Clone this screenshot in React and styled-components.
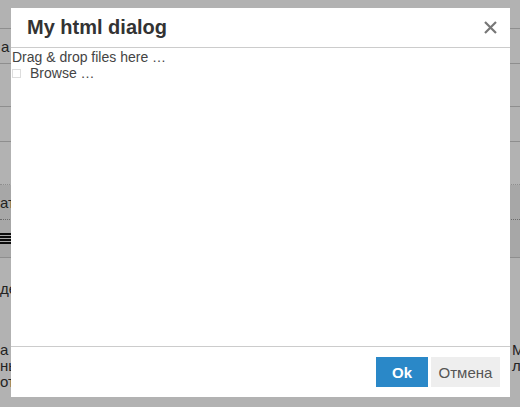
import React from 'react'
import styled, { createGlobalStyle } from 'styled-components'

const GlobalStyle = createGlobalStyle`
  html, body {
    margin: 0;
    padding: 0;
    background: #fff;
    font-family: "Liberation Sans", Arial, sans-serif;
    color: #333;
  }
`

const Page = styled.div`
  width: 520px;
  height: 407px;
  overflow: hidden;
  position: relative;
`

const Row = styled.div`
  height: ${props => props.h}px;
  box-sizing: border-box;
  border-bottom: 1px ${props => props.dotted ? 'dotted' : 'solid'} #ccc;
  display: flex;
  align-items: center;
  font-size: 15px;
  padding-left: 1px;
`

const Toolbar = styled.div`
  background: #f0f0f0;
  border-bottom: 1px solid #ccc;
`

const ToolRow = styled.div`
  height: ${props => props.h}px;
  box-sizing: border-box;
  display: flex;
  align-items: center;
  font-size: 15px;
  border-bottom: ${props => props.dotted ? '1px dotted #999' : 'none'};
`

const Bars = styled.span`
  display: inline-block;
  width: 11px;
  height: 12px;
  background: repeating-linear-gradient(#111 0 2px, transparent 2px 3px);
`

const Text = styled.p`
  margin: 0;
  font-size: 15px;
  line-height: 16px;
  padding-top: ${props => props.top || 0}px;
`

const Columns = styled.div`
  display: grid;
  grid-template-columns: 512px 1fr;
  padding-top: 45px;
`

const Overlay = styled.div`
  position: absolute;
  inset: 0;
  background: rgba(0, 0, 0, 0.3);
`

const Dialog = styled.div`
  position: absolute;
  left: 11px;
  top: 8px;
  width: 499px;
  height: 389px;
  background: #fff;
  display: flex;
  flex-direction: column;
`

const Header = styled.div`
  height: 40px;
  box-sizing: border-box;
  border-bottom: 1px solid #ccc;
  display: flex;
  align-items: center;
  justify-content: space-between;
  padding: 0 13px 0 16px;
`

const Title = styled.h2`
  margin: 0;
  font-size: 20px;
  font-weight: bold;
  color: #333;
`

const Close = styled.button`
  border: 0;
  background: none;
  padding: 0;
  width: 13px;
  height: 13px;
  display: flex;
  cursor: pointer;
`

const Body = styled.div`
  flex: 1;
  padding: 1px 1px;
  font-size: 14px;
  line-height: 16px;
  color: #444;
`

const BrowseLine = styled.div`
  display: flex;
  align-items: center;
`

const Box = styled.span`
  width: 7px;
  height: 7px;
  border: 1px solid #ddd;
  margin-right: 9px;
`

const Footer = styled.div`
  height: 51px;
  box-sizing: border-box;
  border-top: 1px solid #ccc;
  display: flex;
  justify-content: flex-end;
  align-items: flex-start;
  gap: 3px;
  padding: 10px 10px 0 0;
`

const Button = styled.button`
  height: 30px;
  border: 0;
  padding: 0;
  width: ${props => props.w}px;
  font-family: "Liberation Sans", Arial, sans-serif;
  font-size: 15px;
  font-weight: ${props => props.primary ? 'bold' : 'normal'};
  background: ${props => props.primary ? '#2a88c8' : '#eeeeee'};
  color: ${props => props.primary ? '#fff' : '#555'};
  cursor: pointer;
`

export default function App() {
  return (
    <Page>
      <GlobalStyle />
      <Row h={29} />
      <Row h={35}>а</Row>
      <Row h={43} />
      <Row h={35} />
      <Row h={43} dotted />
      <Toolbar>
        <ToolRow h={35} dotted>ат</ToolRow>
        <ToolRow h={37}><Bars /></ToolRow>
      </Toolbar>
      <Text top={23}>де</Text>
      <Columns>
        <div>
          <Text>а</Text>
          <Text>нь</Text>
          <Text>отс</Text>
        </div>
        <div>
          <Text>М</Text>
          <Text>л</Text>
        </div>
      </Columns>
      <Overlay />
      <Dialog>
        <Header>
          <Title>My html dialog</Title>
          <Close aria-label="close">
            <svg width="13" height="13" viewBox="0 0 13 13">
              <path d="M1 1 L12 12 M12 1 L1 12" stroke="#777" strokeWidth="2.2" />
            </svg>
          </Close>
        </Header>
        <Body>
          <div>Drag &amp; drop files here …</div>
          <BrowseLine><Box />Browse …</BrowseLine>
        </Body>
        <Footer>
          <Button primary w={52}>Ok</Button>
          <Button w={69}>Отмена</Button>
        </Footer>
      </Dialog>
    </Page>
  )
}
